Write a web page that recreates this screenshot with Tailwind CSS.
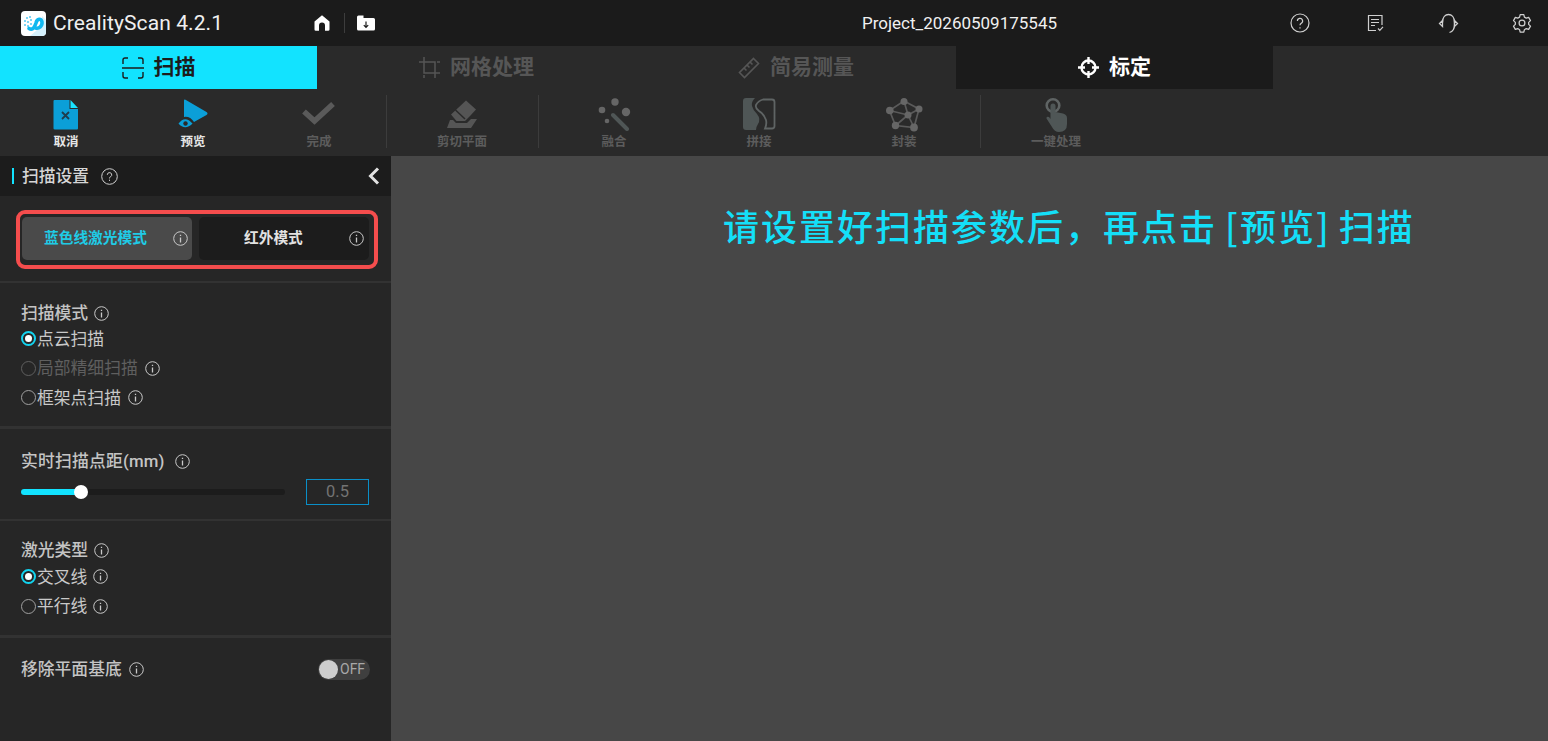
<!DOCTYPE html>
<html lang="zh-CN">
<head>
<meta charset="UTF-8">
<title>CrealityScan 4.2.1</title>
<script src="https://cdn.jsdelivr.net/npm/@tailwindcss/browser@4"></script>
</head>
<body class="w-[1548px] h-[741px] overflow-hidden bg-[#474747] font-['Roboto','Noto_Sans_CJK_SC',sans-serif]">

<!-- title bar -->
<header class="h-[46px] bg-[#1b1b1b] flex items-center relative">
  <svg class="ml-[21px] w-[25px] h-[25px]" viewBox="0 0 25 25">
    <rect width="25" height="25" rx="4" fill="#fff"/>
    <path d="M9 25 L21 25 Q25 25 25 21 L25 9 L21 5 Q22 16 9 25Z" fill="#d5f1fc"/>
    <path d="M3 9h2v2H3zM5 6h2v2H5zM8 5h2v2H8zM6 10h2v2H6zM3 13h2v2H3zM6 14h2v2H6zM9 8h2v2H9zM9 12h2v2H9z" fill="#7ed6f5"/>
    <path d="M8 17.500C12 20 14 15 15 12C16 7.500 20.500 7 21 11C21.500 15 18 18 14.500 17" fill="none" stroke="#10b8f0" stroke-width="3.600" stroke-linecap="round"/>
  </svg>
  <span class="ml-[7px] text-[21px] leading-none text-[#f0f0f0] tracking-[0.1px]">CrealityScan 4.2.1</span>
  <svg class="ml-[90px] w-[18px] h-[18px]" viewBox="0 0 18 18"><path d="M9 1.2 L1.5 7.6 V15.5 Q1.5 16.8 2.8 16.8 H6 V11.5 Q6 8.6 9 8.6 Q12 8.6 12 11.5 V16.8 H15.2 Q16.5 16.8 16.5 15.5 V7.6Z" fill="#fff"/></svg>
  <span class="ml-[13px] w-px h-[20px] bg-[#3d3d3d]"></span>
  <svg class="ml-[11px] w-[20px] h-[18px]" viewBox="0 0 20 18"><path d="M1 3 Q1 1.5 2.5 1.5 H7.5 V16.5 H2.5 Q1 16.5 1 15Z M9 4 H17.5 Q19 4 19 5.5 V15 Q19 16.5 17.5 16.5 H7 V4Z" fill="#fff"/><path d="M10 7.5v6M7.8 11.2 10 13.5l2.2-2.3" fill="none" stroke="#1b1b1b" stroke-width="1.2"/></svg>
  <span class="absolute left-[862px] top-[12px] text-[17px] leading-[22px] text-[#f0f0f0]">Project_20260509175545</span>
  <div class="ml-auto flex items-center">
    <svg class="w-[20px] h-[20px]" viewBox="0 0 20 20" fill="none" stroke="#cfcfcf" stroke-width="1.2"><circle cx="10" cy="10" r="9"/><path d="M7.4 8a2.6 2.6 0 1 1 3.9 2.2c-.9.5-1.3 1-1.3 2"/><path d="M10 14.2v1.2"/></svg>
    <svg class="ml-[57px] w-[17px] h-[18px]" viewBox="0 0 17 18" fill="none" stroke="#cfcfcf" stroke-width="1.2"><path d="M9 16.5H1.5V1.5H15V11"/><path d="M4 5.5h8M4 8.5h8M4 11.5h4"/><path d="M11 14.500l1.800 1.800 3.200-3.400"/></svg>
    <svg class="ml-[54px] w-[21px] h-[21px]" viewBox="0 0 21 21" fill="none" stroke="#cfcfcf" stroke-width="1.3"><path d="M4.500 9.500C4.500 4 7.500 1.500 10.500 1.500S16.500 4 16.500 9.500V12c0 4-2 6.500-5 7.500"/><path d="M4.500 7.500 1.500 10.500l3 3zM16.500 7.500l3 3-3 3z"/></svg>
    <svg class="ml-[53px] mr-[16px] w-[20px] h-[20px]" viewBox="0 0 24 24" fill="none" stroke="#cfcfcf" stroke-width="1.5"><circle cx="12" cy="12" r="3.500"/><path d="M9.800 2h4.400l.7 3 2.200 1.200 2.900-.9 2.200 3.800-2.200 2.100v2.500l2.200 2.100-2.200 3.800-2.900-.9-2.200 1.300-.7 3H9.800l-.7-3-2.200-1.300-2.900.9-2.200-3.800 2.200-2.100V11.200L1.800 9.100 4 5.300l2.900.9L9.100 5z" stroke-linejoin="round"/></svg>
  </div>
</header>

<!-- tabs -->
<nav class="h-[43px] bg-[#2a2a2a] flex text-[21px] font-bold">
  <div class="w-[317px] bg-[#12e3ff] text-[#1c1c1c] flex items-center justify-center gap-[10px]">
    <svg class="w-[22px] h-[22px]" viewBox="0 0 22 22" fill="none" stroke="#1c1c1c" stroke-width="1.4"><path d="M1 7V3q0-2 2-2h3M16 1h3q2 0 2 2v4M1 15v4q0 2 2 2h3M16 21h3q2 0 2-2v-4M0 11h22"/></svg>
    <span>扫描</span>
  </div>
  <div class="w-[319px] text-[#565656] flex items-center justify-center gap-[10px]">
    <svg class="w-[21px] h-[21px]" viewBox="0 0 21 21" fill="none" stroke="#565656" stroke-width="1.500"><path d="M5 0v16h16M0 5h16v16M0 5h3M18 5h3M5 18v3"/></svg>
    <span>网格处理</span>
  </div>
  <div class="w-[320px] text-[#565656] flex items-center justify-center gap-[10px]">
    <svg class="w-[22px] h-[22px]" viewBox="0 0 22 22" fill="none" stroke="#565656" stroke-width="1.600"><path d="M15.500 1.500 20.500 6.500 6.500 20.500 1.500 15.500Z"/><path d="M12 5l2.500 2.500M9 8l2.500 2.500M6 11l2.500 2.500"/></svg>
    <span>简易测量</span>
  </div>
  <div class="w-[317px] bg-[#1b1b1b] text-white flex items-center justify-center gap-[10px]">
    <svg class="w-[21px] h-[21px]" viewBox="0 0 21 21" fill="none" stroke="#fff"><circle cx="10.500" cy="10.500" r="7" stroke-width="2.400"/><path d="M10.500 0v7M10.500 14v7M0 10.500h7M14 10.500h7" stroke-width="2.400"/></svg>
    <span>标定</span>
  </div>
</nav>

<!-- toolbar -->
<div class="h-[67px] bg-[#2a2a2a] flex text-[12.500px] leading-[16px] font-bold text-[#5c5c5c]">
  <div class="ml-[3px] w-[126px] flex flex-col items-center pt-[6px] text-[#e6e6e6]">
    <span class="h-[39px] flex items-center"><svg class="w-[26px] h-[31px]" viewBox="0 0 26 31"><path d="M1.500 1H16.500V10H25V29.500Q25 30.500 24 30.500H2Q.5 30.500 .5 29.500V2Q.5 1 1.500 1Z" fill="#0b9fd8"/><path d="M17.500 1 25 9H17.500Z" fill="#18e2ff"/><path d="M9 13l7 7M16 13l-7 7" stroke="#1f3d4d" stroke-width="1.800"/></svg></span>
    <span>取消</span>
  </div>
  <div class="ml-px w-[126px] flex flex-col items-center pt-[6px] text-[#e6e6e6]">
    <span class="h-[39px] flex items-center"><svg class="w-[30px] h-[31px]" viewBox="0 0 30 31"><path d="M6 1.500 Q6 0 7.500 .8L28.500 13Q30.500 14.500 28.500 16L16 23 Q12 17 6 18Z" fill="#0b9fd8"/><path d="M.5 24.500Q7 16 14.500 24.500Q7 32 .5 24.500Z" fill="#0b9fd8"/><circle cx="7.500" cy="24.500" r="2.200" fill="#2a2a2a"/></svg></span>
    <span>预览</span>
  </div>
  <div class="w-[126px] flex flex-col items-center pt-[6px]">
    <span class="h-[39px] flex items-center"><svg class="w-[34px] h-[31px]" viewBox="0 0 34 31"><path d="M2 12.500 12.500 22 31 5" fill="none" stroke="#5a5a5a" stroke-width="5.500"/></svg></span>
    <span>完成</span>
  </div>
  <span class="ml-[4px] mt-[6px] w-px h-[53px] bg-[#3c3c3c]"></span>
  <div class="ml-[12px] w-[126px] flex flex-col items-center pt-[6px]">
    <span class="h-[39px] flex items-center"><svg class="w-[31px] h-[31px]" viewBox="0 0 31 31"><path d="M19 1.500 29 10.500 23 17 18 22H9.500L4 15.500Z" fill="#555"/><path d="M8.500 11 18 20" stroke="#2a2a2a" stroke-width="1.500"/><path d="M6 21H3L0 29H24L30 20H24L20 24H9Z" fill="#555"/></svg></span>
    <span>剪切平面</span>
  </div>
  <span class="ml-[13px] mt-[6px] w-px h-[53px] bg-[#3c3c3c]"></span>
  <div class="ml-[12px] w-[126px] flex flex-col items-center pt-[6px]">
    <span class="h-[39px] flex items-center"><svg class="w-[33px] h-[33px]" viewBox="0 0 33 33"><circle cx="4" cy="12" r="3.300" fill="#666"/><circle cx="17" cy="4" r="3.700" fill="#666"/><circle cx="28" cy="14" r="4.200" fill="#666"/><circle cx="9" cy="23" r="2.300" fill="#666"/><path d="M15 17 29 31" stroke="#4f5656" stroke-width="4" stroke-linecap="round"/></svg></span>
    <span>融合</span>
  </div>
  <div class="ml-[19px] w-[126px] flex flex-col items-center pt-[6px]">
    <span class="h-[39px] flex items-center"><svg class="w-[33px] h-[33px]" viewBox="0 0 33 33"><path d="M3 0H12Q8 4 9 8Q10 12 14 16Q18 21 15 26Q13 29 13 32H3Q0 32 0 29V3Q0 0 3 0Z" fill="#4f5656"/><path d="M20 1.500H29Q31.500 1.500 31.500 4V28Q31.500 30.500 29 30.500H22Q24 26 23 22Q21 16 16 13Q12 10 13 7Q15 3 20 1.500Z" fill="none" stroke="#5f6464" stroke-width="1.800"/></svg></span>
    <span>拼接</span>
  </div>
  <div class="ml-[19px] w-[126px] flex flex-col items-center pt-[6px]">
    <span class="h-[39px] flex items-center"><svg class="w-[37px] h-[34px]" viewBox="0 0 37 34" fill="none" stroke="#5a5a5a" stroke-width="1.700"><path d="M18 3 3.500 12.500 9.500 27.500 28 29.500 33 11 18 3ZM18 3 22 17M3.500 12.500 22 17M33 11 22 17M9.500 27.500 22 17M28 29.500 22 17"/><g fill="#666" stroke="none"><circle cx="18" cy="3.500" r="3.500"/><circle cx="3.800" cy="12.500" r="3.800"/><circle cx="33" cy="11" r="3.500"/><circle cx="9.500" cy="27.500" r="3.700"/><circle cx="28" cy="29.500" r="3.900"/><circle cx="22" cy="17" r="3.500"/></g></svg></span>
    <span>封装</span>
  </div>
  <span class="ml-[13px] mt-[6px] w-px h-[53px] bg-[#3c3c3c]"></span>
  <div class="ml-[12px] w-[126px] flex flex-col items-center pt-[6px]">
    <span class="h-[39px] flex items-center"><svg class="w-[26px] h-[36px]" viewBox="0 0 26 36"><circle cx="10" cy="8.500" r="6.300" fill="none" stroke="#5f6464" stroke-width="2.600"/><path d="M7.500 9Q7.500 6.500 10 6.500T12.500 9V15L20 16.500Q24 17.500 24 21V27Q24 35 16 35Q11.500 35 9 30L3.500 21.500Q3 19 6 20L7.500 22Z" fill="#4f5656"/></svg></span>
    <span>一键处理</span>
  </div>
</div>

<div class="flex h-[585px]">
  <!-- settings panel -->
  <aside class="w-[391px] bg-[#262626] text-[#c9c9c9]">
    <div class="h-[40px] bg-[#1c1c1c] flex items-center pl-[12px] pr-[11px]">
      <span class="w-[2px] h-[16px] bg-[#12e3ff]"></span>
      <span class="ml-[8px] pt-px text-[16.800px] font-medium text-[#d6d6d6]">扫描设置</span>
      <svg class="ml-[12px] w-[17px] h-[17px]" viewBox="0 0 17 17" fill="none" stroke="#d0d0d0" stroke-width="1"><circle cx="8.500" cy="8.500" r="7.800"/><path d="M6.300 6.800a2.200 2.200 0 1 1 3.300 1.900c-.8.400-1.100.8-1.100 1.700"/><path d="M8.500 11.700v1.200"/></svg>
      <svg class="ml-auto w-[12px] h-[18px]" viewBox="0 0 12 18" fill="none" stroke="#e2e2e2" stroke-width="3"><path d="M10 1.500 2.500 9l7.500 7.500"/></svg>
    </div>

    <div class="pt-[14px] px-[16px] h-[87px] border-b-2 border-[#323232]">
      <div class="w-[362px] h-[59px] border-[4px] border-[#f54d4d] rounded-[9px] bg-[#262626] flex gap-[7px] pl-[2px] pt-[3px] text-[14.700px] font-bold">
        <div class="w-[170px] h-[43px] rounded-[5px] bg-[#4a4a4a] flex items-center relative text-[#1fcbe6]">
          <span class="ml-[22px]">蓝色线激光模式</span>
          <svg class="absolute right-[4px] top-[14px] w-[15px] h-[15px]" viewBox="0 0 15 15" fill="none" stroke="#c9c9c9"><circle cx="7.500" cy="7.500" r="6.800"/><path d="M7.500 6.500v5M7.500 3.800v1.300" stroke-width="1.300"/></svg>
        </div>
        <div class="w-[170px] h-[43px] rounded-[5px] bg-[#1c1c1c] flex items-center relative text-[#e2e2e2]">
          <span class="ml-[45px]">红外模式</span>
          <svg class="absolute right-[5px] top-[14px] w-[15px] h-[15px]" viewBox="0 0 15 15" fill="none" stroke="#c9c9c9"><circle cx="7.500" cy="7.500" r="6.800"/><path d="M7.500 6.500v5M7.500 3.800v1.300" stroke-width="1.300"/></svg>
        </div>
      </div>
    </div>

    <section class="h-[146px] px-[21px] pt-[18px] border-b-[3px] border-[#323232] text-[16.800px] leading-[24px]">
      <div class="flex items-center gap-[6px] font-medium text-[#c4c4c4] h-[24px]">扫描模式
        <svg class="w-[15px] h-[15px]" viewBox="0 0 15 15" fill="none" stroke="#c9c9c9"><circle cx="7.500" cy="7.500" r="6.800"/><path d="M7.500 6.500v5M7.500 3.800v1.300" stroke-width="1.300"/></svg>
      </div>
      <div class="mt-[-1px] h-[29.500px] flex items-center">
        <span class="w-[15px] h-[15px] rounded-full border-2 border-[#12d4f0] flex items-center justify-center"><span class="w-[7px] h-[7px] rounded-full bg-white"></span></span>
        <span class="ml-px">点云扫描</span>
      </div>
      <div class="h-[29.500px] flex items-center text-[#5f5f5f]">
        <span class="w-[15px] h-[15px] rounded-full border border-[#5f5f5f]"></span>
        <span class="ml-px">局部精细扫描</span>
        <svg class="ml-[7px] w-[15px] h-[15px]" viewBox="0 0 15 15" fill="none" stroke="#c9c9c9"><circle cx="7.500" cy="7.500" r="6.800"/><path d="M7.500 6.500v5M7.500 3.800v1.300" stroke-width="1.300"/></svg>
      </div>
      <div class="h-[29.500px] flex items-center">
        <span class="w-[15px] h-[15px] rounded-full border border-[#a0a0a0]"></span>
        <span class="ml-px">框架点扫描</span>
        <svg class="ml-[7px] w-[15px] h-[15px]" viewBox="0 0 15 15" fill="none" stroke="#c9c9c9"><circle cx="7.500" cy="7.500" r="6.800"/><path d="M7.500 6.500v5M7.500 3.800v1.300" stroke-width="1.300"/></svg>
      </div>
    </section>

    <section class="h-[92px] px-[21px] pt-[20px] border-b-2 border-[#323232]">
      <div class="flex items-center gap-[10px] text-[16.800px] font-medium leading-[24px] text-[#c4c4c4] tracking-[0.2px]">实时扫描点距(mm)
        <svg class="w-[15px] h-[15px]" viewBox="0 0 15 15" fill="none" stroke="#c9c9c9"><circle cx="7.500" cy="7.500" r="6.800"/><path d="M7.500 6.500v5M7.500 3.800v1.300" stroke-width="1.300"/></svg>
      </div>
      <div class="mt-[6px] flex items-center h-[26px]">
        <div class="w-[264px] h-[6px] rounded-full bg-[#1c1c1c] relative">
          <div class="w-[60px] h-[6px] rounded-full bg-[#12e3ff]"></div>
          <span class="absolute left-[53px] top-[-4px] w-[14px] h-[14px] rounded-full bg-white"></span>
        </div>
        <div class="ml-[21px] w-[63px] h-[26px] border-[1.500px] border-[#0a8fc8] flex items-center justify-center text-[16.500px] text-[#737373]">0.5</div>
      </div>
    </section>

    <section class="h-[117px] px-[21px] pt-[17px] border-b-[3px] border-[#323232] text-[16.800px] leading-[24px]">
      <div class="flex items-center gap-[6px] font-medium text-[#c4c4c4] h-[24px]">激光类型
        <svg class="w-[15px] h-[15px]" viewBox="0 0 15 15" fill="none" stroke="#c9c9c9"><circle cx="7.500" cy="7.500" r="6.800"/><path d="M7.500 6.500v5M7.500 3.800v1.300" stroke-width="1.300"/></svg>
      </div>
      <div class="h-[29.500px] flex items-center">
        <span class="w-[15px] h-[15px] rounded-full border-2 border-[#12d4f0] flex items-center justify-center"><span class="w-[7px] h-[7px] rounded-full bg-white"></span></span>
        <span class="ml-px">交叉线</span>
        <svg class="ml-[6px] w-[15px] h-[15px]" viewBox="0 0 15 15" fill="none" stroke="#c9c9c9"><circle cx="7.500" cy="7.500" r="6.800"/><path d="M7.500 6.500v5M7.500 3.800v1.300" stroke-width="1.300"/></svg>
      </div>
      <div class="h-[29.500px] flex items-center">
        <span class="w-[15px] h-[15px] rounded-full border border-[#a0a0a0]"></span>
        <span class="ml-px">平行线</span>
        <svg class="ml-[6px] w-[15px] h-[15px]" viewBox="0 0 15 15" fill="none" stroke="#c9c9c9"><circle cx="7.500" cy="7.500" r="6.800"/><path d="M7.500 6.500v5M7.500 3.800v1.300" stroke-width="1.300"/></svg>
      </div>
    </section>

    <section class="px-[21px] pt-[19px] flex items-center text-[16.800px] leading-[24px] font-medium text-[#c4c4c4]">
      <span>移除平面基底</span>
      <svg class="ml-[7px] w-[15px] h-[15px]" viewBox="0 0 15 15" fill="none" stroke="#c9c9c9"><circle cx="7.500" cy="7.500" r="6.800"/><path d="M7.500 6.500v5M7.500 3.800v1.300" stroke-width="1.300"/></svg>
      <div class="ml-auto w-[52px] h-[21px] rounded-full bg-[#3f3f3f] flex items-center pl-px">
        <span class="w-[19px] h-[19px] rounded-full bg-[#cdcdcd]"></span>
        <span class="ml-[2px] text-[14px] font-normal text-[#a8a8a8]">OFF</span>
      </div>
    </section>
  </aside>

  <!-- viewport -->
  <main class="flex-1 pl-[332px] pt-[47px]">
    <p class="font-['Noto_Sans_CJK_SC',sans-serif] text-[36px] leading-[44px] font-medium text-[#14dff8] whitespace-pre tracking-[2px] [word-spacing:-2px]">请设置好扫描参数后，再点击 [预览] 扫描</p>
  </main>
</div>
</body>
</html>
